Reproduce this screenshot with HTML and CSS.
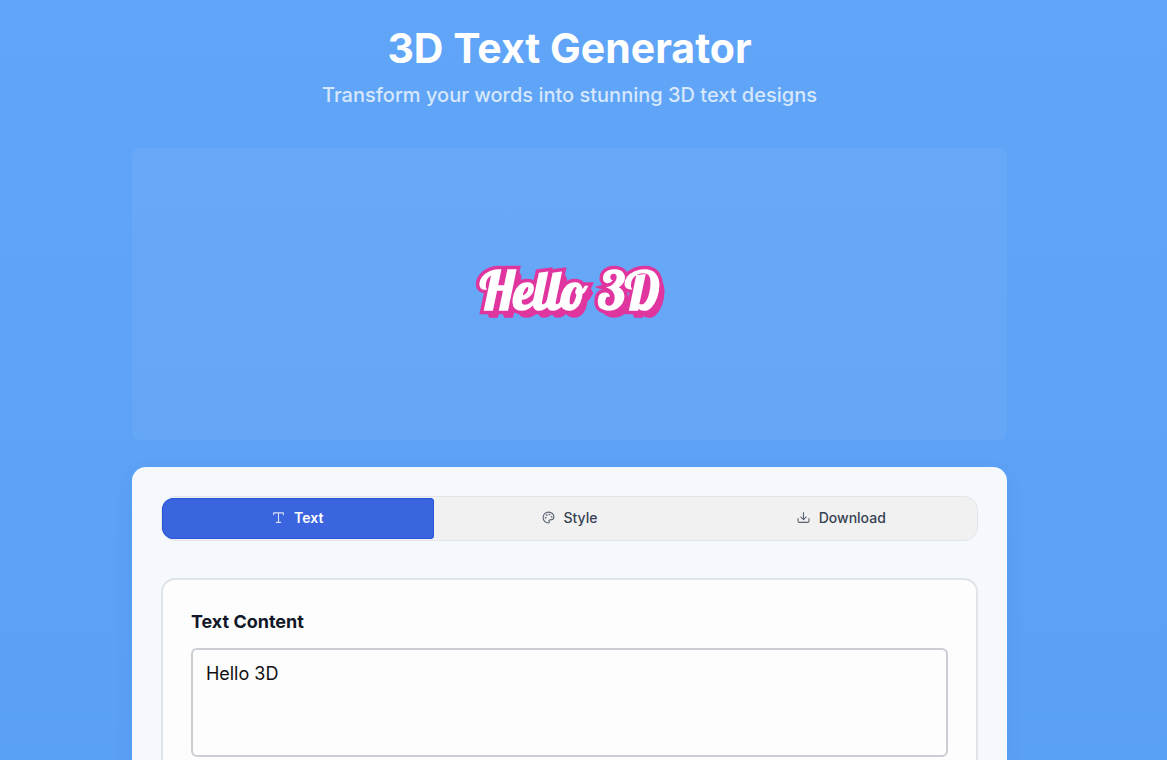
FILE: index.html
```
<!DOCTYPE html>
<html lang="en">
<head>
    <meta charset="UTF-8">
    <meta name="viewport" content="width=device-width, initial-scale=1.0">
    <title>3D Text Generator</title>
    <link rel="stylesheet" href="styles.css">
</head>
<body>
    <main class="container">
        <header class="header">
            <h1>3D Text Generator</h1>
            <p>Transform your words into stunning 3D text designs</p>
        </header>

        <section class="preview" aria-label="Preview">
            <span class="text-3d" id="preview-text">Hello 3D</span>
        </section>

        <section class="panel">
            <div class="tabs" role="tablist">
                <button type="button" class="tab active" role="tab" aria-selected="true">
                    <svg class="icon" viewBox="0 0 24 24" aria-hidden="true">
                        <path d="M3 7V3.500h18V7M12 3.500V21M8 21h8"/>
                    </svg>
                    Text
                </button>
                <button type="button" class="tab" role="tab" aria-selected="false">
                    <svg class="icon" viewBox="0 0 24 24" aria-hidden="true">
                        <path d="M12 2a10 10 0 0 0 0 20c.9 0 1.650-.75 1.650-1.690 0-.44-.18-.84-.44-1.130-.29-.29-.44-.65-.44-1.120a1.640 1.640 0 0 1 1.670-1.670h2c3.050 0 5.560-2.500 5.560-5.550C22 6 17.500 2 12 2Z"/>
                        <circle class="dot" cx="13.500" cy="6.500" r="1"/>
                        <circle class="dot" cx="17.500" cy="10.500" r="1"/>
                        <circle class="dot" cx="8.500" cy="7.500" r="1"/>
                        <circle class="dot" cx="6.500" cy="12.500" r="1"/>
                    </svg>
                    Style
                </button>
                <button type="button" class="tab" role="tab" aria-selected="false">
                    <svg class="icon" viewBox="0 0 24 24" aria-hidden="true">
                        <path d="M2 14v5a2 2 0 0 0 2 2h16a2 2 0 0 0 2-2v-5M7 11l5 5 5-5M12 16V3"/>
                    </svg>
                    Download
                </button>
            </div>

            <div class="card">
                <label for="text-content">Text Content</label>
                <textarea id="text-content" name="text-content">Hello 3D</textarea>
            </div>
        </section>
    </main>
    <script>
        const textInput = document.getElementById('text-content');
        const previewText = document.getElementById('preview-text');

        textInput.addEventListener('input', function () {
            previewText.textContent = textInput.value;
        });
    </script>
</body>
</html>
```
FILE: styles.css
```
* {
    box-sizing: border-box;
}
html {
    height: 100%;
    overflow: hidden;
}
body {
    height: 100%;
    margin: 0;
    padding: 24px 28px 0 0;
    overflow: hidden;
    font-family: Inter, sans-serif;
    background: linear-gradient(#60a5f8, #5aa0f4);
}
.container {
    width: 75vw;
    min-width: 320px;
    margin: 0 auto;
}
.header {
    text-align: center;
    margin-bottom: 38px;
}
.header h1 {
    margin: 0 0 8px;
    font-size: 41px;
    line-height: 48px;
    font-weight: 700;
    color: #fff;
}
.header p {
    margin: 0;
    font-size: 20px;
    line-height: 30px;
    font-weight: 500;
    color: #d7e8fd;
}
.preview {
    display: flex;
    align-items: center;
    justify-content: center;
    min-height: 292px;
    margin-bottom: 27px;
    padding-bottom: 6px;
    border-radius: 8px;
    background: rgba(255, 255, 255, 0.05);
}
.text-3d {
    font-family: Lobster, "Liberation Serif", serif;
    font-size: 52px;
    font-weight: 700;
    line-height: 1;
    color: #fff;
    -webkit-text-stroke: 7px #e0359f;
    paint-order: stroke fill;
    text-shadow: 1px 1px 0 #e0359f, 2px 2px 0 #e0359f, 3px 3px 0 #e0359f, 4px 4px 0 #e0359f, 4px 5px 0 #e0359f, 5px 6px 0 #e0359f, 5px 7px 0 #e0359f;
}
.panel {
    padding: 29px;
    border-radius: 14px;
    background: #f5f9fe;
    box-shadow: 0 6px 20px rgba(30, 64, 175, 0.08);
}
.tabs {
    display: grid;
    grid-template-columns: repeat(3, 1fr);
    margin-bottom: 37px;
    padding: 1px 0;
    border: 1px solid #e3e5e9;
    border-radius: 14px;
    background: #f1f1f2;
}
.tab {
    display: flex;
    align-items: center;
    justify-content: center;
    gap: 9px;
    height: 41px;
    padding: 0 0 2px;
    border: none;
    border-radius: 4px;
    background: transparent;
    font-family: inherit;
    font-size: 14px;
    font-weight: 500;
    color: #374151;
    cursor: pointer;
}
.tab.active {
    border-radius: 12px 4px 4px 12px;
    background: #3b64df;
    box-shadow: inset 0 0 0 1px #2756dc;
    font-weight: 600;
    color: #fff;
}
.icon {
    width: 13px;
    height: 13px;
    fill: none;
    stroke: currentColor;
    stroke-width: 2;
    stroke-linecap: round;
    stroke-linejoin: round;
    opacity: 0.8;
}
.dot {
    fill: currentColor;
    stroke-width: 1;
}
.card {
    padding: 28px;
    border: 2px solid #e0e3e9;
    border-radius: 14px;
    background: #fdfdfe;
}
.card label {
    display: block;
    margin-bottom: 12px;
    font-size: 18px;
    line-height: 28px;
    font-weight: 700;
    color: #111827;
}
.card textarea {
    display: block;
    width: 100%;
    height: 109px;
    padding: 10px 13px;
    border: 2px solid #caced4;
    border-radius: 6px;
    background: #fdfdfe;
    font-family: inherit;
    font-size: 18px;
    line-height: 28px;
    color: #111;
    resize: none;
}
```
